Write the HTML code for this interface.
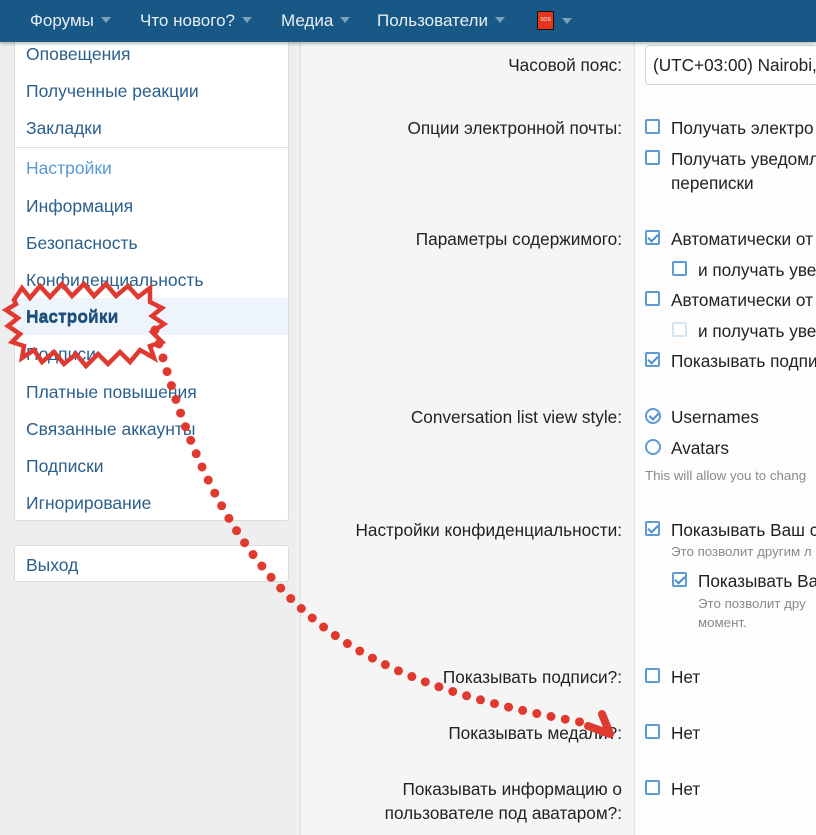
<!DOCTYPE html>
<html><head><meta charset="utf-8"><style>
*{margin:0;padding:0;box-sizing:border-box}
body{width:816px;height:835px;overflow:hidden;background:#eeeeee;font-family:"Liberation Sans","DejaVu Sans",sans-serif;position:relative}
.hdr{position:absolute;left:0;top:0;width:816px;height:42px;background:#185886;box-shadow:0 2px 3px rgba(0,0,0,.25);z-index:5}
.nav{position:absolute;top:11px;color:#e8eef4;font-size:17px;white-space:nowrap}
.car{display:inline-block;width:0;height:0;border-left:5px solid transparent;border-right:5px solid transparent;border-top:6px solid #7d9fbd;margin-left:7px;vertical-align:3px}
.side{position:absolute;left:14px;top:30px;width:275px;height:491px;background:#fff;border:1px solid #dcdcdc;border-radius:3px}
.side a{position:absolute;left:11px;font-size:17.5px;color:#2b5f8c;white-space:nowrap}
.side2{position:absolute;left:14px;top:545px;width:275px;height:37px;background:#fff;border:1px solid #dcdcdc;border-radius:3px}
.main{position:absolute;left:300px;top:42px;width:516px;height:793px;background:#f5f5f5;border-left:1px solid #dedede}
.rc{position:absolute;left:634px;top:42px;width:182px;height:793px;background:#fdfdfd;border-left:1px solid #e2e2e2}
.lb{position:absolute;right:194px;font-size:17.2px;color:#222;text-align:right;white-space:nowrap;line-height:23px}
.t{position:absolute;font-size:17.2px;color:#222;white-space:nowrap;line-height:23px}
.s{position:absolute;font-size:13.3px;color:#8a8a8a;white-space:nowrap}
.cb{position:absolute;width:15px;height:15px;border:2px solid #5f9bd3;border-radius:2px;background:#fff}
.cb.k::after{content:"";position:absolute;left:3px;top:0px;width:4px;height:8px;border:solid #4d8ccc;border-width:0 2px 2px 0;transform:rotate(45deg)}
.cb.d{border-color:#d6e5f3}
.rd{position:absolute;width:16px;height:16px;border:2px solid #5f9bd3;border-radius:50%;background:#fff}
.rd.k::after{content:"";position:absolute;left:3.5px;top:1px;width:4px;height:7px;border:solid #4d8ccc;border-width:0 2px 2px 0;transform:rotate(45deg)}
</style></head><body>
<div class="hdr">
<div class="nav" style="left:30px">Форумы<span class="car"></span></div>
<div class="nav" style="left:140px">Что нового?<span class="car"></span></div>
<div class="nav" style="left:281px">Медиа<span class="car"></span></div>
<div class="nav" style="left:377px">Пользователи<span class="car"></span></div>
<div style="position:absolute;left:537px;top:11px;width:17px;height:19px;background:#e3361c;border:1px solid #111;color:#fff;font-size:5px;text-align:center;line-height:17px">SOS</div>
<span class="car" style="position:absolute;left:555px;top:18px"></span>
</div>
<div class="side">
<a style="top:13px">Оповещения</a>
<a style="top:50px">Полученные реакции</a>
<a style="top:87px">Закладки</a>
<div style="position:absolute;left:0;right:0;top:116px;border-top:1px solid #e0e0e0"></div>
<a style="top:127px;color:#5a9ad2">Настройки</a>
<a style="top:165px">Информация</a>
<a style="top:202px">Безопасность</a>
<a style="top:239px">Конфиденциальность</a>
<div style="position:absolute;left:0;right:0;top:267px;height:37px;background:#eef4fb"></div>
<a style="top:276px;font-weight:bold;color:#1c4f7c">Настройки</a>
<a style="top:313px">Подписи</a>
<a style="top:351px">Платные повышения</a>
<a style="top:388px">Связанные аккаунты</a>
<a style="top:425px">Подписки</a>
<a style="top:462px">Игнорирование</a>
</div>
<div class="side2"><a style="position:absolute;left:11px;top:9px;font-size:17.5px;color:#2b5f8c">Выход</a></div>
<div class="main"></div>
<div class="rc"></div>
<div style="position:absolute;left:645px;top:45px;width:180px;height:40px;background:#fff;border:1px solid #d8d8d8;border-radius:4px"></div>
<div class="t" style="left:653px;top:54px">(UTC+03:00) Nairobi,</div>
<div class="lb" style="top:54px">Часовой пояс:</div>
<div class="lb" style="top:117px">Опции электронной почты:</div>
<div class="cb" style="left:645px;top:119px"></div><div class="t" style="left:671px;top:117px">Получать электро</div>
<div class="cb" style="left:645px;top:150px"></div><div class="t" style="left:671px;top:148px">Получать уведомл</div>
<div class="t" style="left:671px;top:172px">переписки</div>
<div class="lb" style="top:228px">Параметры содержимого:</div>
<div class="cb k" style="left:645px;top:230px"></div><div class="t" style="left:671px;top:228px">Автоматически от</div>
<div class="cb" style="left:672px;top:261px"></div><div class="t" style="left:698px;top:259px">и получать уве</div>
<div class="cb" style="left:645px;top:291px"></div><div class="t" style="left:671px;top:289px">Автоматически от</div>
<div class="cb d" style="left:672px;top:322px"></div><div class="t" style="left:698px;top:320px">и получать уве</div>
<div class="cb k" style="left:645px;top:352px"></div><div class="t" style="left:671px;top:350px">Показывать подпи</div>
<div class="lb" style="top:406px">Conversation list view style:</div>
<div class="rd k" style="left:645px;top:408px"></div><div class="t" style="left:671px;top:406px">Usernames</div>
<div class="rd" style="left:645px;top:439px"></div><div class="t" style="left:671px;top:437px">Avatars</div>
<div class="s" style="left:645px;top:468px">This will allow you to chang</div>
<div class="lb" style="top:519px">Настройки конфиденциальности:</div>
<div class="cb k" style="left:645px;top:521px"></div><div class="t" style="left:671px;top:519px">Показывать Ваш с</div>
<div class="s" style="left:671px;top:544px">Это позволит другим л</div>
<div class="cb k" style="left:672px;top:572px"></div><div class="t" style="left:698px;top:570px">Показывать Ва</div>
<div class="s" style="left:698px;top:596px">Это позволит дру</div>
<div class="s" style="left:698px;top:615px">момент.</div>
<div class="lb" style="top:666px">Показывать подписи?:</div>
<div class="cb" style="left:645px;top:668px"></div><div class="t" style="left:671px;top:666px">Нет</div>
<div class="lb" style="top:722px">Показывать медали?:</div>
<div class="cb" style="left:645px;top:724px"></div><div class="t" style="left:671px;top:722px">Нет</div>
<div class="lb" style="top:778px">Показывать информацию о</div>
<div class="lb" style="top:802px">пользователе под аватаром?:</div>
<div class="cb" style="left:645px;top:780px"></div><div class="t" style="left:671px;top:778px">Нет</div>
<svg width="816" height="835" style="position:absolute;left:0;top:0;z-index:3">
<polygon points="14,300 22,288 30,298 40,286 50,297 62,284 72,296 84,284 94,296 106,284 116,296 128,286 138,297 150,288 150,302 162,308 152,316 164,324 152,332 162,342 150,346 154,358 140,350 130,362 120,352 108,364 98,354 86,366 76,354 64,364 54,352 42,362 34,350 22,358 24,346 12,342 20,334 8,326 18,318 6,310 16,304" fill="none" stroke="#e0392f" stroke-width="4.5" stroke-linejoin="miter"/>
<path d="M155,330 C175,400 200,490 265,570 C330,650 420,695 592,724" fill="none" stroke="#e0392f" stroke-width="9" stroke-linecap="round" stroke-dasharray="0 14.5"/>
<path d="M588,726 L610,734 L602,714" fill="none" stroke="#e0392f" stroke-width="8" stroke-linejoin="round" stroke-linecap="round"/>
</svg>
<div style="position:absolute;left:26px;top:306px;font-size:17.5px;font-weight:bold;color:#1c4f7c;z-index:4;font-family:'Liberation Sans',sans-serif">Настройки</div>
</body></html>
